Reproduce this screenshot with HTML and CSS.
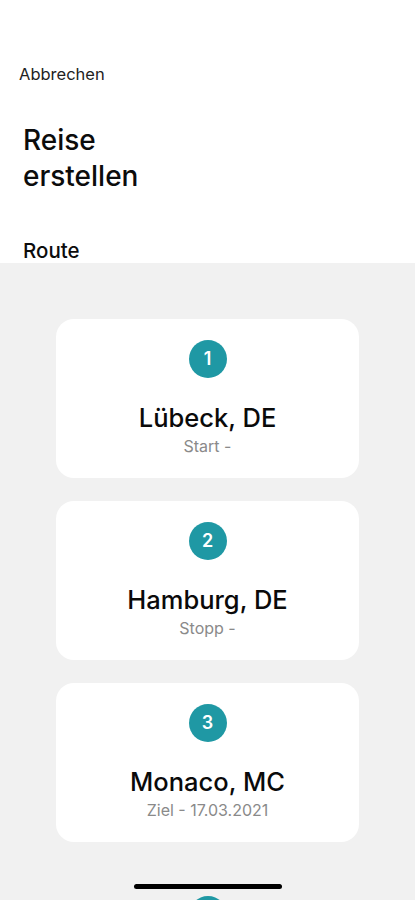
FILE: index.html
```html
<!DOCTYPE html>
<html lang="de">

<head>
    <meta charset="UTF-8">
    <meta name="viewport" content="width=device-width, initial-scale=1.0">
    <title>Reise erstellen</title>
    <link rel="stylesheet" href="styles.css">
</head>

<body>
    <div class="screen">
        <div class="top">
            <div class="cancel">Abbrechen</div>
            <h1 class="title">Reise<br>erstellen</h1>
            <h2 class="section">Route</h2>
        </div>
        <div class="route">
            <div class="stop">
                <div class="num">1</div>
                <div class="city">Lübeck, DE</div>
                <div class="info">Start -</div>
            </div>
            <div class="stop">
                <div class="num">2</div>
                <div class="city">Hamburg, DE</div>
                <div class="info">Stopp -</div>
            </div>
            <div class="stop">
                <div class="num">3</div>
                <div class="city">Monaco, MC</div>
                <div class="info">Ziel - 17.03.2021</div>
            </div>
            <div class="add"></div>
        </div>
        <div class="home_bar"></div>
    </div>
</body>

</html>
```

FILE: styles.css
```css
* {
    margin: 0;
    padding: 0;
    box-sizing: border-box;
}

body {
    font-family: Inter, "Noto Sans", sans-serif;
    color: #111;
    background: #fff;
}

.screen {
    position: relative;
    width: 415px;
    height: 900px;
    overflow: hidden;
}

.top {
    height: 263px;
    padding: 63px 0 0 0;
    background: #fff;
    overflow: hidden;
}

.cancel {
    padding-left: 19px;
    font-size: 16.5px;
    line-height: 22px;
    color: #222;
}

.title {
    margin-top: 37px;
    padding-left: 23px;
    font-size: 28px;
    line-height: 36px;
    font-weight: 500;
    color: #0c0c0c;
}

.section {
    margin-top: 45px;
    padding-left: 23px;
    font-size: 20.5px;
    line-height: 24px;
    font-weight: 500;
    color: #0c0c0c;
}

.route {
    height: 637px;
    background: #f1f1f1;
    padding-top: 56px;
    display: flex;
    flex-direction: column;
    align-items: center;
    gap: 23px;
}

.stop {
    width: 303px;
    height: 159px;
    flex-shrink: 0;
    background: #fff;
    border-radius: 18px;
    display: flex;
    flex-direction: column;
    align-items: center;
    padding-top: 21px;
}

.num {
    width: 38px;
    height: 38px;
    border-radius: 50%;
    background: #1f98a4;
    color: #fff;
    font-size: 18px;
    font-weight: 600;
    line-height: 38px;
    text-align: center;
}

.city {
    margin-top: 25px;
    font-size: 25.5px;
    line-height: 30px;
    font-weight: 500;
    color: #0a0a0a;
}

.info {
    margin-top: 4px;
    font-size: 16px;
    line-height: 18px;
    color: #8a8a8a;
}

.add {
    width: 38px;
    height: 38px;
    flex-shrink: 0;
    border-radius: 50%;
    background: #1f98a4;
    margin-top: 31px;
}

/* iOS home indicator */
.home_bar {
    position: absolute;
    left: 134px;
    top: 884px;
    width: 148px;
    height: 5px;
    border-radius: 3px;
    background: #000;
}
```
